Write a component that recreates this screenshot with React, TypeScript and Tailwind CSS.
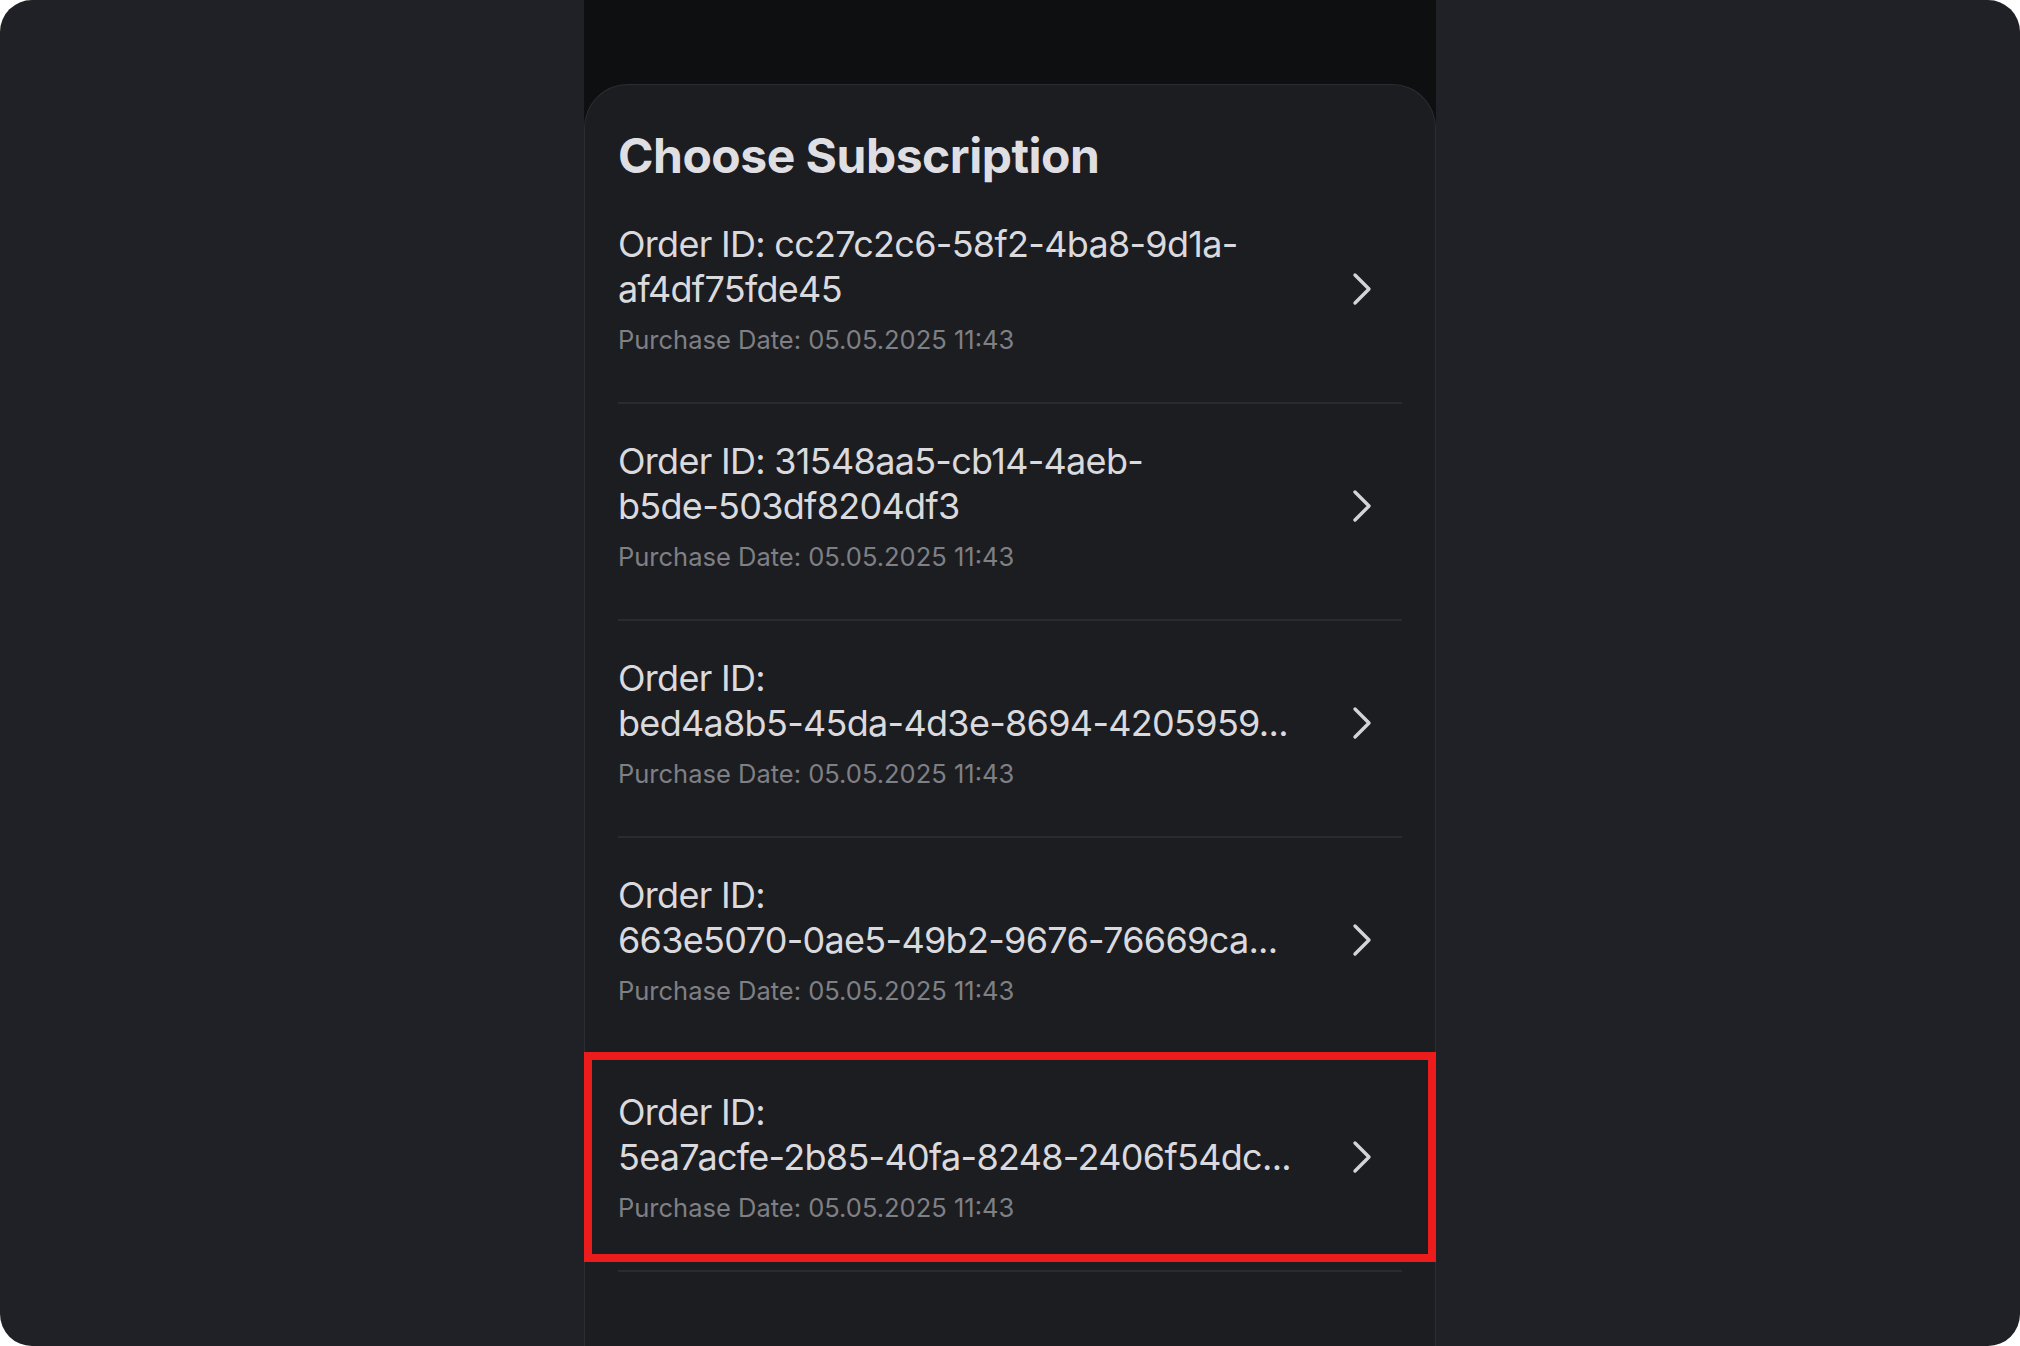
import React from 'react';

type Order = {
  id: string;
  line1: string;
  line2: string;
  date: string;
  highlighted?: boolean;
};

const orders: Order[] = [
  { id: 'a', line1: 'Order ID: cc27c2c6-58f2-4ba8-9d1a-', line2: 'af4df75fde45', date: '05.05.2025 11:43' },
  { id: 'b', line1: 'Order ID: 31548aa5-cb14-4aeb-', line2: 'b5de-503df8204df3', date: '05.05.2025 11:43' },
  { id: 'c', line1: 'Order ID:', line2: 'bed4a8b5-45da-4d3e-8694-4205959...', date: '05.05.2025 11:43' },
  { id: 'd', line1: 'Order ID:', line2: '663e5070-0ae5-49b2-9676-76669ca...', date: '05.05.2025 11:43' },
  { id: 'e', line1: 'Order ID:', line2: '5ea7acfe-2b85-40fa-8248-2406f54dc...', date: '05.05.2025 11:43', highlighted: true },
];

function Chevron() {
  return (
    <svg width="22" height="34" viewBox="0 0 22 34" className="shrink-0">
      <polyline
        points="4,3 18,17 4,31"
        fill="none"
        stroke="#d4d4d8"
        strokeWidth="3.4"
        strokeLinecap="round"
        strokeLinejoin="round"
      />
    </svg>
  );
}

function OrderRow({ order }: { order: Order }) {
  return (
    <div className="relative">
      <div className="flex items-center pt-[35px] pb-[47px]">
        <div className="flex-1 min-w-0">
          <div className="text-[36px] leading-[45px] tracking-[-0.7px] text-[#dadade] truncate">{order.line1}</div>
          <div className="text-[36px] leading-[45px] tracking-[-0.7px] text-[#dadade] truncate">{order.line2}</div>
          <div className="mt-[13px] text-[25.5px] leading-[30px] text-[#7f8085]">Purchase Date: {order.date}</div>
        </div>
        <div className="mr-[29px] ml-4">
          <Chevron />
        </div>
      </div>
      <div className="h-[2px] bg-[#2a2b30]" />

      {/* highlight frame drawn over the selected row */}
      {order.highlighted && (
        <div className="absolute -top-[3px] bottom-[10px] -left-[34px] -right-[34px] border-[8px] border-[#ec1c1c] pointer-events-none" />
      )}
    </div>
  );
}

export default function App() {
  return (
    <div className="w-[2020px] h-[1346px] bg-white" style={{ fontFamily: 'Inter, "Noto Sans", sans-serif' }}>
      <div className="h-full rounded-[32px] bg-[#202126] flex justify-center overflow-hidden">
        <div className="w-[852px] flex flex-col bg-[#0e0f11]">
          <div className="h-[84px] shrink-0" />
          <div className="flex-1 rounded-t-[44px] border border-b-0 border-[#2c2d32] bg-[#1c1d21] px-[33px]">
            <h1 className="pt-[42px] mb-[2px] text-[48px] leading-[58px] font-bold tracking-[-0.5px] text-[#dfdfe3]">
              Choose Subscription
            </h1>
            {orders.map((order) => (
              <OrderRow key={order.id} order={order} />
            ))}
          </div>
        </div>
      </div>
    </div>
  );
}
